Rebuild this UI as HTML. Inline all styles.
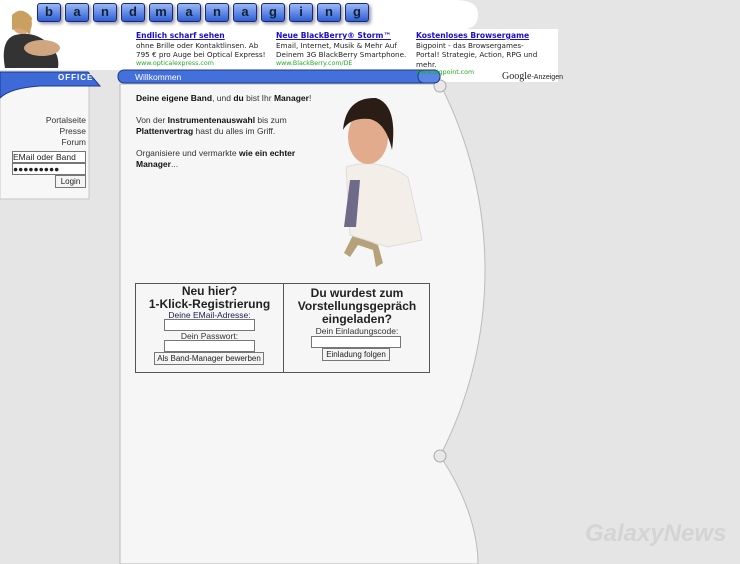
<!DOCTYPE html>
<html><head><meta charset="utf-8"><style>
*{margin:0;padding:0;box-sizing:border-box}
body{width:740px;height:564px;overflow:hidden;background:#e5e5e5;font-family:"Liberation Sans",Arial,sans-serif;position:relative;font-size:9px;color:#222}
.a{position:absolute}
.ad{font-family:"DejaVu Sans",sans-serif;font-size:7.2px;line-height:9.5px;color:#222;white-space:nowrap}
.ad b{color:#1a0dcc;text-decoration:underline;font-weight:bold;display:block;font-size:7.6px}
.ad i{font-style:normal;color:#2a2;font-size:6.3px;display:block;line-height:8px}
.c{font-size:8.5px;line-height:11px;color:#333}
.c b{color:#111}
input,.btn{position:absolute;background:#fff;border:1px solid #777;font-family:"Liberation Sans",sans-serif;font-size:8.5px;color:#222}
.btn{background:#f4f4f4;text-align:center;line-height:11px;height:13px;white-space:nowrap;font-size:8px}
.logo span{display:inline-block;width:24px;height:19px;margin-right:4px;background:linear-gradient(#9ab8f7,#2f5fd6);border:1.5px solid #1a2a6a;border-radius:3px;color:#123;font-weight:bold;font-size:13px;text-align:center;line-height:16px;box-shadow:2px 2px 3px #99a}
</style></head><body>
<svg class="a" style="left:0;top:0" width="740" height="564">
<path d="M0 0 H455 Q478 0 478 14 Q478 28 465 29 H0 Z" fill="#fff"/>
<rect x="0" y="0" width="412" height="70" fill="#fff"/>
<rect x="412" y="29" width="146" height="53" fill="#fff"/>
<path d="M120 84 H440 C500 200 500 340 440 456 C470 500 478 540 478 564 H120 Z" fill="#f6f6f6" stroke="#bbb"/>
<rect x="0" y="86" width="89" height="113" fill="#f7f7f7" stroke="#c8c8c8"/>
<circle cx="440" cy="86" r="6" fill="#e8e8e8" stroke="#aaa"/>
<circle cx="440" cy="456" r="6" fill="#e8e8e8" stroke="#aaa"/>
<path d="M0 72 H88 L100 86 H40 Q10 88 0 98 Z" fill="#3d6ad6" stroke="#1d3a8a"/>
<rect x="118" y="70" width="322" height="13" rx="6" fill="#4470dc" stroke="#1d3a8a"/>
<rect x="418" y="70" width="22" height="13" rx="6" fill="#5a86e6" stroke="#1d3a8a"/>
<path d="M5 68 Q0 40 15 35 Q35 30 50 45 Q60 55 58 68 Z" fill="#333"/>
<circle cx="22" cy="24" r="10" fill="#d9a77a"/>
<path d="M12 15 Q22 5 32 18 L30 35 Q22 25 12 30Z" fill="#c9a060"/>
<ellipse cx="42" cy="48" rx="18" ry="8" fill="#cfa680"/>
</svg>
<div class="a logo" style="left:37px;top:3px;white-space:nowrap"><span>b</span><span>a</span><span>n</span><span>d</span><span>m</span><span>a</span><span>n</span><span>a</span><span>g</span><span>i</span><span>n</span><span>g</span></div>
<div class="a" style="left:58px;top:73px;color:#fff;font-weight:bold;font-size:8px;letter-spacing:1px">OFFICE</div>
<div class="a" style="left:135px;top:72px;color:#fff;font-size:8.5px">Willkommen</div>
<div class="a ad" style="left:136px;top:31px"><b>Endlich scharf sehen</b>ohne Brille oder Kontaktlinsen. Ab<br>795 € pro Auge bei Optical Express!<i>www.opticalexpress.com</i></div>
<div class="a ad" style="left:276px;top:31px"><b>Neue BlackBerry® Storm™</b>Email, Internet, Musik &amp; Mehr Auf<br>Deinem 3G BlackBerry Smartphone.<i>www.BlackBerry.com/DE</i></div>
<div class="a ad" style="left:416px;top:31px"><b>Kostenloses Browsergame</b>Bigpoint - das Browsergames-<br>Portal! Strategie, Action, RPG und<br>mehr.<i>www.bigpoint.com</i></div>
<div class="a" style="left:502px;top:71px;font-size:7px"><span style="font-family:'Liberation Serif';font-size:10px">Google</span>-Anzeigen</div>
<div class="a c" style="left:20px;top:115px;width:66px;text-align:right;line-height:11px">Portalseite<br>Presse<br>Forum</div>
<input style="left:12px;top:151px;width:74px;height:12px" value="EMail oder Band">
<input style="left:12px;top:163px;width:74px;height:12px" value="●●●●●●●●●">
<div class="btn a" style="left:55px;top:175px;width:31px">Login</div>
<div class="a c" style="left:136px;top:93px;width:190px">
<b>Deine eigene Band</b>, und <b>du</b> bist Ihr <b>Manager</b>!<br><br>
Von der <b>Instrumentenauswahl</b> bis zum <b>Plattenvertrag</b> hast du alles im Griff.<br><br>
Organisiere und vermarkte <b>wie ein echter Manager</b>...</div>
<svg class="a" style="left:328px;top:95px" width="95" height="175">
<path d="M25 140 L50 150 L55 168 L48 172 L45 155 L30 150 L22 162 L16 158Z" fill="#b5a27a"/>
<path d="M18 72 Q50 62 80 82 L94 145 L60 152 L22 140 Z" fill="#f3efe8" stroke="#ddd"/>
<polygon points="22,85 32,85 28,132 16,132" fill="#6e6a8a"/>
<ellipse cx="40" cy="42" rx="20" ry="27" fill="#e2ac8c"/>
<path d="M15 35 Q18 2 48 3 Q70 10 64 55 Q58 28 42 24 Q22 22 15 35Z" fill="#2a1d16"/>
</svg>
<div class="a" style="left:135px;top:283px;width:295px;height:90px;border:1px solid #555;background:#f6f6f6"></div>
<div class="a" style="left:283px;top:283px;width:1px;height:90px;background:#555"></div>
<div class="a" style="left:136px;top:285px;width:147px;text-align:center;font-weight:bold;font-size:12px;line-height:13px">Neu hier?<br>1-Klick-Registrierung</div>
<div class="a c" style="left:136px;top:310px;width:147px;text-align:center;color:#225">Deine EMail-Adresse:</div>
<input style="left:164px;top:319px;width:91px;height:12px">
<div class="a c" style="left:136px;top:331px;width:147px;text-align:center">Dein Passwort:</div>
<input style="left:164px;top:340px;width:91px;height:12px">
<div class="btn a" style="left:154px;top:352px;width:110px">Als Band-Manager bewerben</div>
<div class="a" style="left:284px;top:287px;width:146px;text-align:center;font-weight:bold;font-size:12px;line-height:13px">Du wurdest zum<br>Vorstellungsgepräch<br>eingeladen?</div>
<div class="a c" style="left:284px;top:326px;width:146px;text-align:center">Dein Einladungscode:</div>
<input style="left:311px;top:336px;width:90px;height:12px">
<div class="btn a" style="left:322px;top:348px;width:68px">Einladung folgen</div>
<div class="a" style="left:585px;top:520px;color:#d4d4d4;font-size:24px;font-weight:bold;font-style:italic">GalaxyNews</div>
</body></html>
